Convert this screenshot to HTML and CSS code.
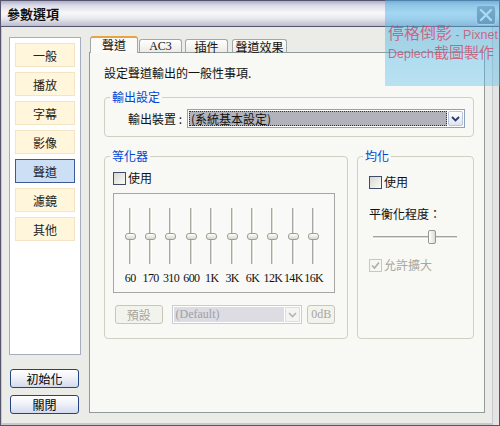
FILE: index.html
```html
<!DOCTYPE html>
<html>
<head>
<meta charset="utf-8">
<link rel="stylesheet" href="styles.css">
</head>
<body>
<div class="window">
  <div class="titlebar">
    <span class="title">參數選項</span>
    <span class="close"><svg width="14" height="14" viewBox="0 0 14 14"><path d="M2 2 L12 12 M12 2 L2 12" stroke="#fff" stroke-width="2.4" stroke-linecap="round"/></svg></span>
  </div>
  <div class="body">
    <div class="side">
      <div class="nav">
        <div class="navbtn">一般</div>
        <div class="navbtn">播放</div>
        <div class="navbtn">字幕</div>
        <div class="navbtn">影像</div>
        <div class="navbtn sel">聲道</div>
        <div class="navbtn">濾鏡</div>
        <div class="navbtn">其他</div>
      </div>
      <button class="xpbtn first">初始化</button>
      <button class="xpbtn second">關閉</button>
    </div>
    <div class="main">
      <div class="tabs">
        <div class="tab active w48">聲道</div>
        <div class="tab w43 ac3">AC3</div>
        <div class="tab w43 gap3">插件</div>
        <div class="tab w55 gap4">聲道效果</div>
      </div>
      <div class="panel">
        <p class="desc">設定聲道輸出的一般性事項.</p>
        <fieldset class="grp out">
          <legend>輸出設定</legend>
          <div class="out-row">
            <span class="lbl">輸出裝置 :</span>
            <div class="combo">
              <div class="combo-val">(系統基本設定)</div>
              <div class="combo-btn"><svg width="9" height="6" viewBox="0 0 9 6"><path d="M1 1 L4.5 4.5 L8 1" fill="none" stroke="#2c3c64" stroke-width="1.8"/></svg></div>
            </div>
          </div>
        </fieldset>
        <div class="row2">
          <fieldset class="grp eq">
            <legend>等化器</legend>
            <div class="eq-inner">
              <div class="chk"><span class="box"></span><span>使用</span></div>
              <div class="eqbox">
                <div class="bands">
                  <div class="band"><div class="track"><span class="thumb"></span></div><span class="freq">60</span></div>
                  <div class="band"><div class="track"><span class="thumb"></span></div><span class="freq">170</span></div>
                  <div class="band"><div class="track"><span class="thumb"></span></div><span class="freq">310</span></div>
                  <div class="band"><div class="track"><span class="thumb"></span></div><span class="freq">600</span></div>
                  <div class="band"><div class="track"><span class="thumb"></span></div><span class="freq">1K</span></div>
                  <div class="band"><div class="track"><span class="thumb"></span></div><span class="freq">3K</span></div>
                  <div class="band"><div class="track"><span class="thumb"></span></div><span class="freq">6K</span></div>
                  <div class="band"><div class="track"><span class="thumb"></span></div><span class="freq">12K</span></div>
                  <div class="band"><div class="track"><span class="thumb"></span></div><span class="freq">14K</span></div>
                  <div class="band"><div class="track"><span class="thumb"></span></div><span class="freq">16K</span></div>
                </div>
              </div>
              <div class="preset">
                <span class="dbtn preset-btn">預設</span>
                <div class="dcombo">
                  <div class="dcombo-val">(Default)</div>
                  <div class="dcombo-btn"><svg width="9" height="6" viewBox="0 0 9 6"><path d="M1 1 L4.5 4.5 L8 1" fill="none" stroke="#b4b4b0" stroke-width="1.6"/></svg></div>
                </div>
                <span class="dbtn db">0dB</span>
              </div>
            </div>
          </fieldset>
          <fieldset class="grp bal">
            <legend>均化</legend>
            <div class="bal-inner">
              <div class="chk"><span class="box"></span><span>使用</span></div>
              <div class="bal-label">平衡化程度：</div>
              <div class="hslider"><div class="htrack"></div><span class="hthumb"></span></div>
              <div class="chk dis"><span class="box dbox"><svg width="11" height="11" viewBox="0 0 11 11"><path d="M2 5.5 L4.5 8 L9 2.5" fill="none" stroke="#aeaea6" stroke-width="1.6"/></svg></span><span>允許擴大</span></div>
            </div>
          </fieldset>
        </div>
      </div>
    </div>
  </div>
  <div class="wm">
    <div class="wm1">停格倒影<span class="lat"> - Pixnet</span></div>
    <div class="wm2"><span class="lat">Deplech</span>截圖製作</div>
  </div>
</div>
</body>
</html>
```
FILE: styles.css
```css
body {
  margin: 0;
  font-family: "Noto Sans CJK TC", sans-serif;
  font-size: 12px;
  color: #111;
}
.window {
  position: relative;
  width: 500px;
  height: 426px;
  box-sizing: border-box;
  border: 1px solid #55556e;
  background: #ebebe7;
  display: flex;
  flex-direction: column;
}
.titlebar {
  height: 26px;
  flex: none;
  box-sizing: border-box;
  border-bottom: 1px solid #54546c;
  background: linear-gradient(#aeaec8 0, #dcdce8 18%, #f8f8fb 48%, #e6e6ee 72%, #bcbccc 100%);
  display: flex;
  align-items: center;
  justify-content: space-between;
  padding: 0 3px 0 6px;
}
.title {
  font-weight: bold;
  font-size: 13px;
  color: #111;
}
.close {
  width: 20px;
  height: 20px;
  margin-top: 2px;
  box-sizing: border-box;
  border: 1px solid #e8e8f0;
  border-radius: 3px;
  background: linear-gradient(#a6a6b6, #86869a);
  display: flex;
  align-items: center;
  justify-content: center;
}
.body {
  flex: 1;
  display: flex;
  gap: 8px;
  padding: 9px 0 0 8px;
  box-shadow: inset 1px 0 0 #c8c8d4, inset -6px 0 0 #e4e4e2, inset -7px 0 0 #c8c8d0, inset 0 -2px 0 #c8c8d0;
}
.side {
  width: 72px;
  display: flex;
  flex-direction: column;
  padding-top: 1px;
}
.nav {
  height: 318px;
  box-sizing: border-box;
  border: 1px solid #a6adc0;
  background: #fff;
  padding: 5px 0 0 5px;
  display: flex;
  flex-direction: column;
  gap: 5px;
}
.navbtn {
  width: 60px;
  height: 24px;
  box-sizing: border-box;
  border: 1px solid #f3e5c3;
  background: #fff6dc;
  display: flex;
  align-items: center;
  justify-content: center;
  color: #222;
}
.navbtn.sel {
  background: #cddff5;
  border-color: #3c5a96;
}
.xpbtn {
  margin-left: 1px;
  width: 69px;
  height: 19px;
  box-sizing: border-box;
  border: 1px solid #23447e;
  border-radius: 3px;
  background: linear-gradient(#ffffff, #f0f2f8 45%, #d2daee);
  font: 12px/17px "Noto Sans CJK TC", sans-serif;
  padding: 0;
  color: #000;
}
.xpbtn.first { margin-top: 14px; }
.xpbtn.second { margin-top: 7px; }
.main {
  width: 396px;
  display: flex;
  flex-direction: column;
}
.tabs {
  height: 16px;
  display: flex;
  align-items: flex-start;
  padding-left: 1px;
  position: relative;
  z-index: 1;
}
.tab {
  margin-top: 3px;
  height: 13px;
  box-sizing: border-box;
  border: 1px solid #a0a8ac;
  border-bottom: none;
  border-radius: 3px 3px 0 0;
  background: linear-gradient(#ffffff, #ecebe5);
  line-height: 13px;
  text-align: center;
  font-size: 12px;
}
.tab.active {
  margin-top: 0;
  height: 17px;
  border-top: 2px solid #e6a445;
  background: #fafaf8;
  line-height: 14px;
}
.w48 { width: 48px; }
.w43 { width: 43px; }
.w55 { width: 55px; }
.ac3 { margin-left: 1px; font-family: "Liberation Serif", serif; }
.gap3 { margin-left: 3px; }
.gap4 { margin-left: 4px; }
.panel {
  height: 361px;
  box-sizing: border-box;
  border: 1px solid #919b9c;
  background: #f8f8f5;
  padding: 13px 10px 0 14px;
}
.desc {
  margin: 0;
  line-height: 14px;
}
.grp {
  margin: 0;
  padding: 0;
  border: 1px solid #d0d0c2;
  border-radius: 4px;
  min-width: 0;
}
.grp legend {
  padding: 0 2px;
  margin-left: 5px;
  color: #0046d5;
  font-size: 12px;
  line-height: 14px;
}
.out { margin-top: 10px; }
.out-row {
  display: flex;
  align-items: center;
  padding: 5px 9px 8px 23px;
}
.lbl {
  width: 59px;
  flex: none;
  white-space: nowrap;
}
.combo {
  width: 278px;
  flex: none;
  height: 19px;
  box-sizing: border-box;
  border: 1px solid #8ea2bc;
  background: #fff;
  display: flex;
  padding: 1px;
  gap: 1px;
}
.combo-val {
  flex: 1;
  background: #b2b2bb;
  border: 1px dotted #333;
  line-height: 13px;
  padding-left: 1px;
  color: #111;
}
.combo-btn {
  width: 15px;
  box-sizing: border-box;
  border: 1px solid #b8c4dc;
  border-radius: 2px;
  background: linear-gradient(#ffffff, #dfe4f0);
  display: flex;
  align-items: center;
  justify-content: center;
}
.row2 {
  display: flex;
  gap: 9px;
  margin-top: 12px;
}
.eq { width: 244px; box-sizing: border-box; }
.bal { flex: 1; }
.eq-inner { padding: 8px 12px 14px 8px; }
.chk {
  display: flex;
  align-items: center;
  gap: 2px;
  height: 14px;
  line-height: 14px;
}
.box {
  width: 13px;
  height: 13px;
  box-sizing: border-box;
  border: 1px solid #3e4e6a;
  background: linear-gradient(135deg, #d8d8d0, #fbfbf8);
  display: flex;
  align-items: center;
  justify-content: center;
}
.dbox { border-color: #c8c8c0; background: #f6f6f2; }
.dis { color: #a8a8a0; }
.eqbox {
  margin-top: 8px;
  width: 222px;
  height: 100px;
  box-sizing: border-box;
  border: 1px solid #a6a6a2;
  background: #f9f9f7;
  padding: 14px 0 0 6px;
}
.bands {
  display: grid;
  grid-template-columns: repeat(10, 20.4px);
}
.band {
  display: flex;
  flex-direction: column;
  align-items: center;
}
.track {
  position: relative;
  width: 3px;
  height: 56px;
  box-sizing: border-box;
  border-left: 1px solid #a9a9a1;
  border-right: 1px solid #fff;
  background: #dcdcd4;
}
.thumb {
  position: absolute;
  left: 50%;
  top: 25px;
  width: 11px;
  height: 7px;
  margin-left: -5.5px;
  box-sizing: border-box;
  border: 1px solid #9c9c92;
  border-radius: 3px;
  background: linear-gradient(#ffffff, #d8d8d0);
}
.freq {
  margin-top: 7px;
  font: 12px/14px "Liberation Serif", serif;
  letter-spacing: -0.6px;
  color: #111;
  white-space: nowrap;
}
.preset {
  display: flex;
  align-items: center;
  margin-top: 12px;
  height: 19px;
}
.dbtn {
  height: 19px;
  box-sizing: border-box;
  border: 1px solid #c6c6bc;
  border-radius: 3px;
  background: #f3f3ed;
  color: #a6a69e;
  display: flex;
  align-items: center;
  justify-content: center;
}
.preset-btn { width: 48px; margin-left: 2px; }
.db { width: 28px; margin-left: 5px; font-family: "Liberation Serif", serif; }
.dcombo {
  width: 132px;
  height: 19px;
  margin-left: 9px;
  box-sizing: border-box;
  border: 1px solid #c9ccd2;
  background: #fff;
  display: flex;
  padding: 1px;
  gap: 1px;
}
.dcombo-val {
  flex: 1;
  background: #dcdce2;
  color: #a0a0a6;
  font-family: "Liberation Serif", serif;
  line-height: 15px;
  padding-left: 2px;
}
.dcombo-btn {
  width: 15px;
  background: #f4f4f0;
  border: 1px solid #dedede;
  box-sizing: border-box;
  display: flex;
  align-items: center;
  justify-content: center;
}
.bal-inner { padding: 12px 8px 0 11px; }
.bal-label {
  margin-top: 18px;
  line-height: 14px;
}
.hslider {
  position: relative;
  margin: 9px 0 0 4px;
  width: 84px;
  height: 14px;
}
.htrack {
  position: relative;
  top: 6px;
  height: 1px;
  border-top: 1px solid #a6a69e;
  border-bottom: 1px solid #fff;
  background: #d8d8d0;
}
.hthumb {
  position: absolute;
  left: 55px;
  top: 0;
  width: 8px;
  height: 14px;
  box-sizing: border-box;
  border: 1px solid #96968c;
  border-radius: 2px;
  background: linear-gradient(90deg, #ffffff, #dcdcd4);
}
.dis { margin-top: 14px; }
.wm {
  position: absolute;
  top: -1px;
  right: -1px;
  width: 115px;
  height: 86px;
  box-sizing: border-box;
  padding: 25px 0 0 3px;
  background: linear-gradient(rgba(70, 178, 230, 0.5), rgba(90, 190, 235, 0.4));
  color: rgba(215, 60, 90, 0.72);
  font-family: "Liberation Sans", "Noto Sans CJK TC", sans-serif;
  white-space: nowrap;
}
.wm1 { font-size: 16px; line-height: 17px; }
.wm2 { font-size: 15px; line-height: 17px; }
.lat { font-size: 12.5px; }
```
